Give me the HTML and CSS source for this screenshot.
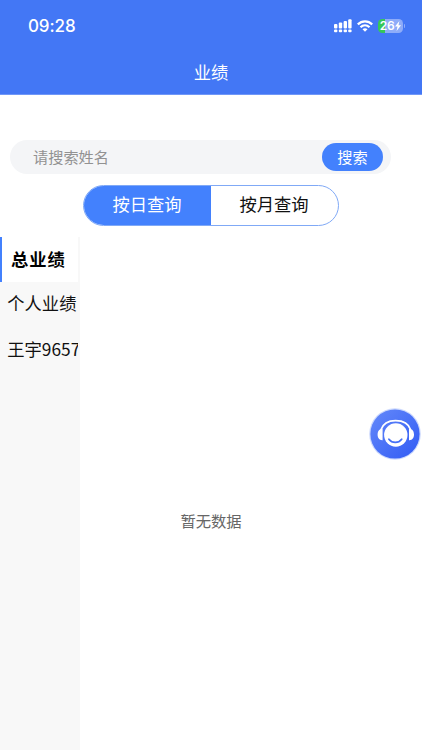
FILE: index.html
```html
<!DOCTYPE html>
<html lang="zh-CN">
<head>
<meta charset="utf-8">
<title>业绩</title>
<link rel="stylesheet" href="styles.css">
</head>
<body>
<header class="header">
  <div class="status">
    <time class="clock">09:28</time>
    <svg class="signal" width="18" height="14" viewBox="0 0 18 14" fill="#fff">
      <rect x="0" y="5" width="3.4" height="4.5" rx="1"/><rect x="4.8" y="3.6" width="3.4" height="5.9" rx="1"/><rect x="9.6" y="1.9" width="3.4" height="7.6" rx="1"/><rect x="14.2" y="0.2" width="3.4" height="9.3" rx="1"/>
      <rect x="0" y="10.5" width="3.4" height="2.8" rx="1"/><rect x="4.8" y="10.5" width="3.4" height="2.8" rx="1"/><rect x="9.6" y="10.5" width="3.4" height="2.8" rx="1"/><rect x="14.2" y="10.5" width="3.4" height="2.8" rx="1"/>
    </svg>
    <svg class="wifi" width="16" height="12" viewBox="0 0 16 12" fill="none" stroke="#fff" stroke-width="2.2">
      <path d="M.8 4.4C4.9.3 11.1.3 15.2 4.4"/><path d="M3.5 7.2c2.6-2.5 6.4-2.5 9 0"/><path d="M5.5 9.2c1.5-1.3 3.5-1.3 5 0L8 11.8z" fill="#fff" stroke="none"/>
    </svg>
    <div class="battery"><span>26</span><svg width="6" height="10" viewBox="0 0 6 10"><path d="M4.4 0 0 5.6h2.5L1.6 10 6 4.2H3.5z" fill="#fff"/></svg></div>
    <i class="battery-tip"></i>
  </div>
  <h1 class="title">业绩</h1>
</header>
<div class="search">
  <span class="placeholder">请搜索姓名</span>
  <button class="search-btn">搜索</button>
</div>
<div class="tabs">
  <div class="tab tab-active">按日查询</div>
  <div class="tab">按月查询</div>
</div>
<div class="content">
  <nav class="sidebar">
    <div class="item item-active">总业绩</div>
    <div class="item">个人业绩</div>
    <div class="item">王宇9657</div>
  </nav>
  <main class="main"></main>
</div>
<p class="empty">暂无数据</p>
<div class="service">
  <svg width="54" height="54" viewBox="0 0 54 54">
    <defs>
      <linearGradient id="disc" x1="0" y1="0" x2="1" y2="1"><stop offset="0" stop-color="#6489fa"/><stop offset="1" stop-color="#315bf4"/></linearGradient>
    </defs>
    <circle cx="27" cy="27" r="25.8" fill="#cbd8fd"/>
    <circle cx="27" cy="27" r="24.6" fill="url(#disc)"/>
    <path d="M12.8 23C15 16.5 20.4 13.7 27.6 13.7S40.6 16.5 42.8 23" fill="none" stroke="#fff" stroke-width="1.7"/>
    <circle cx="27.8" cy="28" r="11.7" fill="#fff"/>
    <path d="M14.6 22v11.2c-3.2.2-5-2-5-5.6s1.8-5.8 5-5.6zM41 22v11.2c3.2.2 5-2 5-5.6s-1.8-5.8-5-5.6z" fill="#fff"/>
    <path d="M20.9 32.2c3.2 4.3 9.6 4.3 12.8 0" fill="none" stroke="#4670f6" stroke-width="1.7" stroke-linecap="round"/>
  </svg>
</div>
</body>
</html>
```
FILE: styles.css
```css
* { box-sizing: border-box; }
body {
  margin: 0;
  width: 422px;
  height: 750px;
  display: flex;
  flex-direction: column;
  position: relative;
  overflow: hidden;
  background: #fff;
  color: #111;
  font-family: "Noto Sans CJK SC", sans-serif;
}
.header {
  height: 95px;
  flex: none;
  background: #4377f5;
  border-bottom: 1px solid #7097f7;
  color: #fff;
}
.status {
  height: 52px;
  padding: 0 19px 0 28px;
  display: flex;
  align-items: center;
}
.clock {
  flex: 1;
  font: 500 17px/20px Inter, sans-serif;
  letter-spacing: -0.1px;
}
.signal { margin-right: 5px; }
.wifi { margin-right: 5px; }
.battery {
  width: 25px;
  height: 14px;
  border-radius: 4.5px;
  display: flex;
  align-items: center;
  justify-content: center;
  gap: 1px;
  background: linear-gradient(90deg, #35c759 26%, #8eacf9 26%);
  font: 600 12px/14px Inter, sans-serif;
  letter-spacing: -0.4px;
}
.battery-tip {
  width: 1px;
  height: 4px;
  margin-left: 1px;
  margin-right: -2px;
  border-radius: 0 1px 1px 0;
  background: #8eacf9;
}
.title {
  margin: 8px 0 0;
  text-align: center;
  font-size: 17.3px;
  line-height: 24px;
  font-weight: 400;
}
.search {
  flex: none;
  width: 381px;
  height: 34px;
  margin: 45px 0 0 10px;
  padding: 0 8px 0 23px;
  display: flex;
  align-items: center;
  justify-content: space-between;
  border-radius: 17px;
  background: #f4f5f7;
}
.placeholder {
  color: #929292;
  font-size: 15.2px;
  line-height: 32px;
  padding-bottom: 2px;
}
.search-btn {
  width: 61px;
  height: 28px;
  padding: 0 0 2px;
  border: 0;
  border-radius: 14px;
  background: #4381fd;
  color: #fff;
  font: 400 15.2px/26px "Noto Sans CJK SC", sans-serif;
}
.tabs {
  flex: none;
  width: 256px;
  height: 41px;
  margin: 11px 0 0 83px;
  display: flex;
  overflow: hidden;
  border: 1px solid #80a9f6;
  border-radius: 21px;
}
.tab {
  flex: 1;
  padding-right: 1px;
  text-align: center;
  font-size: 17.3px;
  line-height: 36px;
}
.tab-active {
  background: #4381fd;
  color: #fff;
}
.content {
  flex: 1;
  display: flex;
  margin-top: 11px;
}
.sidebar {
  width: 80px;
  padding-right: 2px;
  background: #f8f8f8;
}
.item {
  height: 45.3px;
  padding-left: 7.3px;
  overflow: hidden;
  white-space: nowrap;
  font-size: 17.3px;
  line-height: 42px;
}
.item-active {
  padding-left: 9px;
  border-left: 2px solid #4381fd;
  background: #fff;
  color: #000;
  font-weight: 700;
  line-height: 43px;
  letter-spacing: 1px;
}
.main { flex: 1; }
.empty {
  position: absolute;
  top: 508px;
  left: 0;
  width: 422px;
  margin: 0;
  text-align: center;
  color: #666;
  font-size: 15.3px;
  line-height: 24px;
}
.service {
  position: absolute;
  left: 368px;
  top: 407px;
  width: 54px;
  height: 54px;
}
.service svg { display: block; }
```
